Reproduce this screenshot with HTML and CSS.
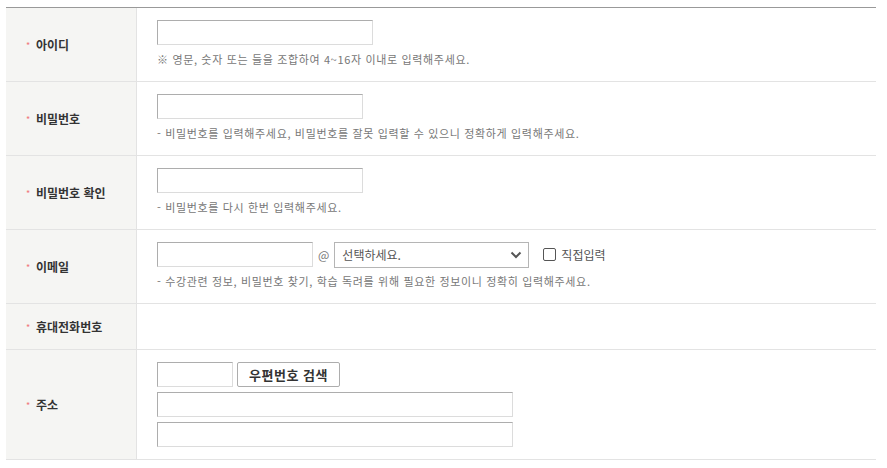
FILE: index.html
```html
<!DOCTYPE html>
<html lang="ko">
<head>
<meta charset="utf-8">
<title>회원가입</title>
<link rel="stylesheet" href="styles.css">
</head>
<body>
<div class="form">
  <div class="row">
    <div class="label"><span class="req">*</span>아이디</div>
    <div class="cell">
      <input class="inp w216" type="text">
      <p class="help">※ 영문, 숫자 또는 들을 조합하여 4~16자 이내로 입력해주세요.</p>
    </div>
  </div>
  <div class="row">
    <div class="label"><span class="req">*</span>비밀번호</div>
    <div class="cell">
      <input class="inp w206" type="password">
      <p class="help">- 비밀번호를 입력해주세요, 비밀번호를 잘못 입력할 수 있으니 정확하게 입력해주세요.</p>
    </div>
  </div>
  <div class="row">
    <div class="label"><span class="req">*</span>비밀번호 확인</div>
    <div class="cell">
      <input class="inp w206" type="password">
      <p class="help">- 비밀번호를 다시 한번 입력해주세요.</p>
    </div>
  </div>
  <div class="row">
    <div class="label"><span class="req">*</span>이메일</div>
    <div class="cell">
      <div class="line">
        <input class="inp w156" type="text">
        <span class="at">@</span>
        <div class="select">
          <span>선택하세요.</span>
          <svg width="12" height="8" viewBox="0 0 12 8"><path d="M1.5 1.5 L6 6 L10.5 1.5" fill="none" stroke="#555" stroke-width="2"/></svg>
        </div>
        <label class="chk"><span class="box"></span>직접입력</label>
      </div>
      <p class="help">- 수강관련 정보, 비밀번호 찾기, 학습 독려를 위해 필요한 정보이니 정확히 입력해주세요.</p>
    </div>
  </div>
  <div class="row">
    <div class="label"><span class="req">*</span>휴대전화번호</div>
    <div class="cell empty"></div>
  </div>
  <div class="row">
    <div class="label"><span class="req">*</span>주소</div>
    <div class="cell addr">
      <div class="line">
        <input class="inp w76" type="text">
        <button class="btn" type="button">우편번호 검색</button>
      </div>
      <input class="inp w356" type="text">
      <input class="inp w356" type="text">
    </div>
  </div>
</div>
</body>
</html>
```
FILE: styles.css
```css
* { box-sizing: border-box; }
body {
  margin: 0;
  background: #fff;
  font-family: "Noto Sans CJK KR", "Noto Sans", sans-serif;
  color: #333;
}
.form {
  margin: 7px 11px 0 6px;
  border-top: 1px solid #999;
}
.row {
  display: grid;
  grid-template-columns: 131px 1fr;
  border-bottom: 1px solid #e3e3e3;
}
.label {
  background: #f5f5f3;
  border-right: 1px solid #e3e3e3;
  display: flex;
  align-items: center;
  padding-left: 20px;
  font-size: 12px;
  font-weight: bold;
  color: #333;
}
.req {
  color: #f0787a;
  font-size: 9px;
  font-weight: normal;
  width: 10px;
  margin-top: 2px;
}
.cell {
  padding: 12px 20px 14px;
}
.cell.empty {
  height: 45px;
  padding: 0;
}
.inp {
  display: block;
  height: 25px;
  margin: 0;
  border: 1px solid;
  border-color: #adadad #dcdcdc #dcdcdc #adadad;
  background: #fff;
  padding: 0 4px;
}
.w216 { width: 216px; }
.w206 { width: 206px; }
.w156 { width: 156px; }
.w76 { width: 76px; }
.w356 { width: 356px; }
.help {
  margin: 6px 0 0;
  font-size: 11px;
  line-height: 16px;
  height: 16px;
  color: #777;
  letter-spacing: 0.65px;
  white-space: nowrap;
}
.line {
  display: flex;
  align-items: center;
  height: 25px;
}
.at {
  font-size: 12px;
  color: #777;
  margin: 0 5px;
}
.select {
  width: 195px;
  height: 26px;
  border: 1px solid #b5b5b5;
  display: flex;
  align-items: center;
  justify-content: space-between;
  padding: 0 6px 0 7px;
  font-size: 12px;
  color: #555;
}
.chk {
  display: flex;
  align-items: center;
  margin-left: 14px;
  font-size: 12px;
  color: #555;
}
.box {
  width: 13px;
  height: 13px;
  border: 1px solid #555;
  border-radius: 2px;
  margin-right: 5px;
}
.addr { padding-bottom: 12px; }
.addr .inp.w356 { margin-top: 5px; }
.btn {
  margin-left: 4px;
  width: 103px;
  height: 25px;
  border: 1px solid #adadad;
  border-radius: 2px;
  background: #fff;
  font-family: "Noto Sans CJK KR", sans-serif;
  font-size: 13px;
  font-weight: bold;
  color: #333;
  padding: 0;
  letter-spacing: 0.5px;
}
```
